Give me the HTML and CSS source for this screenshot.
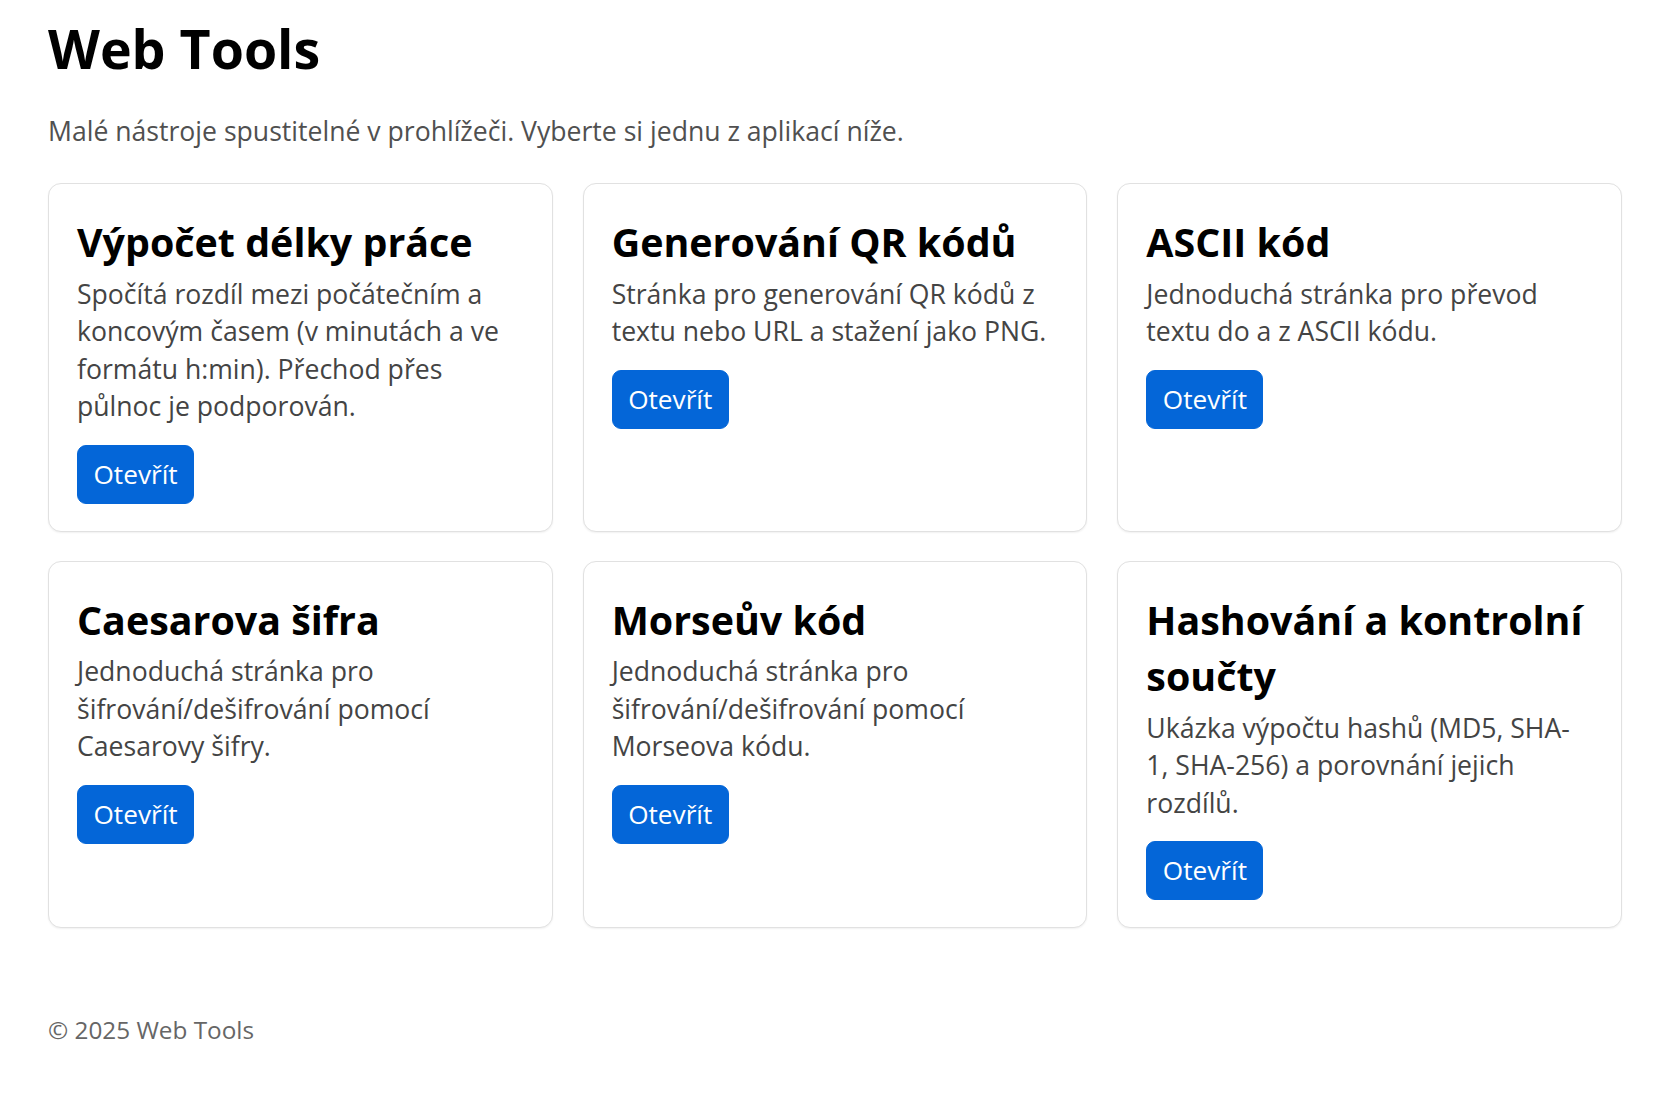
FILE: index.html
```html
<!DOCTYPE html>
<html lang="cs">
<head>
<meta charset="utf-8">
<title>Web Tools</title>
<link rel="stylesheet" href="styles.css">
</head>
<body>
<main class="page">
  <h1 class="page-title">Web Tools</h1>
  <p class="lead">Malé nástroje spustitelné v prohlížeči. Vyberte si jednu z aplikací níže.</p>
  <section class="grid">
    <article class="card">
      <h2 class="card-title">Výpočet délky práce</h2>
      <p class="card-text">Spočítá rozdíl mezi počátečním a koncovým časem (v minutách a ve formátu h:min). Přechod přes půlnoc je podporován.</p>
      <a class="btn" href="#">Otevřít</a>
    </article>
    <article class="card">
      <h2 class="card-title">Generování QR kódů</h2>
      <p class="card-text">Stránka pro generování QR kódů z textu nebo URL a stažení jako PNG.</p>
      <a class="btn" href="#">Otevřít</a>
    </article>
    <article class="card">
      <h2 class="card-title">ASCII kód</h2>
      <p class="card-text">Jednoduchá stránka pro převod textu do a z ASCII kódu.</p>
      <a class="btn" href="#">Otevřít</a>
    </article>
    <article class="card">
      <h2 class="card-title">Caesarova šifra</h2>
      <p class="card-text">Jednoduchá stránka pro šifrování/dešifrování pomocí Caesarovy šifry.</p>
      <a class="btn" href="#">Otevřít</a>
    </article>
    <article class="card">
      <h2 class="card-title">Morseův kód</h2>
      <p class="card-text">Jednoduchá stránka pro šifrování/dešifrování pomocí Morseova kódu.</p>
      <a class="btn" href="#">Otevřít</a>
    </article>
    <article class="card">
      <h2 class="card-title">Hashování a kontrolní součty</h2>
      <p class="card-text">Ukázka výpočtu hashů (MD5, SHA-1, SHA-256) a porovnání jejich rozdílů.</p>
      <a class="btn" href="#">Otevřít</a>
    </article>
  </section>
  <footer class="footer">© 2025 Web Tools</footer>
</main>
</body>
</html>
```

FILE: styles.css
```css
html, body {
  margin: 0;
  padding: 0;
  background: #ffffff;
}

body {
  font-family: "Open Sans", "Noto Sans", "Liberation Sans", sans-serif;
  font-size: 26.6px;
  line-height: 37.5px;
  color: #212529;
}

.page {
  padding: 14px 52px 40px 48px;
}

.page-title {
  margin: 0 0 23px 0;
  font-size: 53.7px;
  line-height: 70.8px;
  font-weight: 700;
  color: #000;
}

.lead {
  margin: 0 0 29px 0;
  font-size: 26.6px;
  line-height: 46.2px;
  font-weight: 400;
  color: #505050;
}

.grid {
  display: grid;
  grid-template-columns: repeat(3, 1fr);
  column-gap: 30px;
  row-gap: 29px;
}

.card {
  display: flex;
  flex-direction: column;
  align-items: flex-start;
  border: 1px solid #e1e1e1;
  border-radius: 13px;
  padding: 28px 28px 27px 28px;
  box-shadow: 0 1px 2px rgba(0, 0, 0, 0.06);
  background: #fff;
}

.card-title {
  margin: 2px 0 5px 0;
  font-size: 39.4px;
  line-height: 56.6px;
  font-weight: 700;
  color: #000;
}

.card-text {
  margin: 0 0 19px 0;
  max-width: 440px;
  color: #444;
}

.btn {
  display: inline-block;
  padding: 10px 15.5px;
  border: 1px solid #0466d8;
  border-radius: 9px;
  background: #0466d8;
  color: #fff;
  text-decoration: none;
  font-size: 26.2px;
  line-height: 37px;
}

.footer {
  margin-top: 83px;
  font-size: 24.3px;
  color: #666;
}
```
